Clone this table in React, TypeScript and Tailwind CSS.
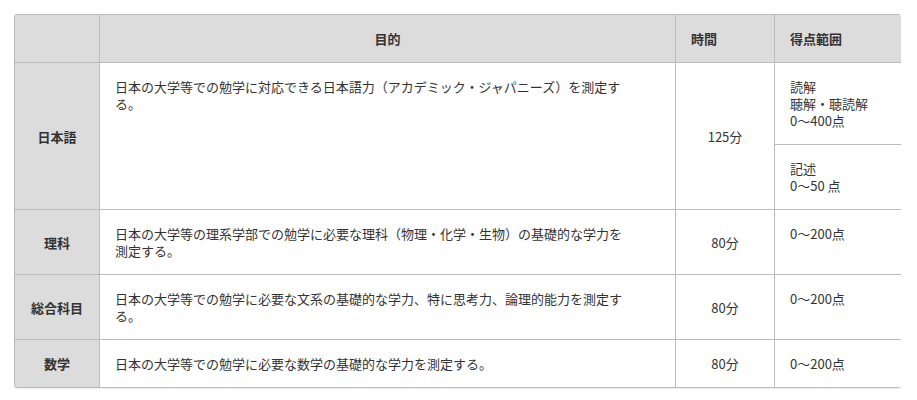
import React from 'react';

const rows = [
  { subject: '理科', purpose: '日本の大学等の理系学部での勉学に必要な理科（物理・化学・生物）の基礎的な学力を測定する。', time: '80分', score: '0〜200点' },
  { subject: '総合科目', purpose: '日本の大学等での勉学に必要な文系の基礎的な学力、特に思考力、論理的能力を測定する。', time: '80分', score: '0〜200点' },
  { subject: '数学', purpose: '日本の大学等での勉学に必要な数学の基礎的な学力を測定する。', time: '80分', score: '0〜200点' },
];

const cell = 'border border-[#bcbcbc] px-[15px] py-[15px]';
const head = `${cell} bg-[#dcdcdc] font-bold align-middle`;
const subj = `${cell} bg-[#dcdcdc] font-bold text-center align-middle`;
const purpose = `${cell} align-top`;
const time = `${cell} text-center align-middle`;
const score = `${cell} align-top`;

export default function App() {
  return (
    <div className="w-[917px] h-[400px] bg-white pt-[14px] pl-[14px] font-['Noto_Sans_CJK_JP',sans-serif] text-[13px] leading-[17px] text-[#333333]">
      <div className="w-[887px] rounded-[3px] overflow-hidden shadow-[0_1px_1px_rgba(0,0,0,0.08)]">
        <table className="w-full border-collapse table-fixed">
          <colgroup>
            <col className="w-[85px]" />
            <col className="w-[576px]" />
            <col className="w-[99px]" />
            <col className="w-[127px]" />
          </colgroup>
          <thead>
            <tr>
              <th className={head}></th>
              <th className={`${head} text-center`}>目的</th>
              <th className={`${head} text-left`}>時間</th>
              <th className={`${head} text-left`}>得点範囲</th>
            </tr>
          </thead>
          <tbody>
            <tr>
              <td rowSpan={2} className={subj}>日本語</td>
              <td rowSpan={2} className={purpose}>
                <div className="max-w-[514px]">日本の大学等での勉学に対応できる日本語力（アカデミック・ジャパニーズ）を測定する。</div>
              </td>
              <td rowSpan={2} className={time}>125分</td>
              <td className={score}>
                読解
                <br />
                聴解・聴読解
                <br />
                0〜400点
              </td>
            </tr>
            <tr>
              <td className={score}>
                記述
                <br />
                0〜50 点
              </td>
            </tr>
            {rows.map((r) => (
              <tr key={r.subject}>
                <td className={subj}>{r.subject}</td>
                <td className={purpose}>
                  <div className="max-w-[514px]">{r.purpose}</div>
                </td>
                <td className={time}>{r.time}</td>
                <td className={score}>{r.score}</td>
              </tr>
            ))}
          </tbody>
        </table>
      </div>
    </div>
  );
}
